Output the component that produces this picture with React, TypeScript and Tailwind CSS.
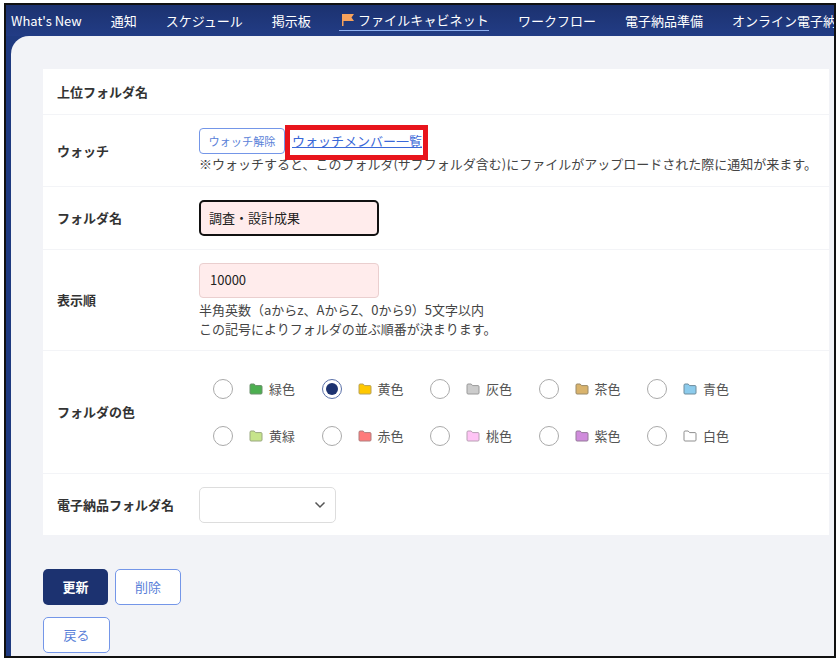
import React from "react";

const font = { fontFamily: '"Noto Sans CJK JP","Noto Sans",sans-serif' };

function Folder({ fill, stroke }: { fill: string; stroke: string }) {
  return (
    <svg width="14" height="12" viewBox="0 0 14 12" className="shrink-0">
      <path d="M1 2.2C1 1.5 1.4 1 2 1h3.2l1.4 1.6H12c.6 0 1 .4 1 1V10c0 .6-.4 1-1 1H2c-.6 0-1-.4-1-1z" fill={fill} stroke={stroke} strokeWidth="1" />
    </svg>
  );
}

const colors = [
  ["緑色", "#4caf50", "#6b8f6c"],
  ["黄色", "#ffc800", "#b8a25a"],
  ["灰色", "#cccccc", "#9a9a9a"],
  ["茶色", "#d9b36c", "#9a8a68"],
  ["青色", "#8ccbec", "#6f8c9c"],
  ["黄緑", "#c6e48b", "#9aa880"],
  ["赤色", "#ff7b7b", "#b08080"],
  ["桃色", "#ffc4f5", "#b8a0b4"],
  ["紫色", "#d08cdc", "#957a9a"],
  ["白色", "#ffffff", "#8f8f8f"],
];

const nav = ["What's New", "通知", "スケジュール", "掲示板"];
const nav2 = ["ワークフロー", "電子納品準備", "オンライン電子納"];

function Row({ label, h, children }: { label: string; h: string; children?: React.ReactNode }) {
  return (
    <div className={`flex items-center border-b border-[#f3f4f7] last:border-b-0 ${h}`}>
      <div className="w-[156px] shrink-0 pl-[14px] text-[13px] font-bold text-[#333333]">{label}</div>
      <div className="flex-1">{children}</div>
    </div>
  );
}

export default function App() {
  return (
    <div className="w-[840px] h-[662px] overflow-hidden bg-white pt-[3px] pl-[4px]" style={font}>
      <div className="flex flex-col w-[832px] h-[655px] overflow-hidden border-2 border-[#111111] bg-[#1f3a80]">
        <nav className="flex items-center h-[31px] shrink-0 gap-[29px] pl-[5px] whitespace-nowrap text-[13px] text-white bg-gradient-to-b from-[#1c3270] to-[#223c85]">
          {nav.map((n) => (
            <span key={n}>{n}</span>
          ))}
          <span className="flex items-center h-[20px] gap-[3px] -ml-[1px] pl-[2px] border-b border-[#8fb0f0] tracking-[0.1px]">
            <svg width="14" height="14" viewBox="0 0 14 14" className="shrink-0">
              <path d="M1 1h12l-2.5 3.5L13 8H2.5v5H1z" fill="#f7a25c" />
            </svg>
            ファイルキャビネット
          </span>
          {nav2.map((n) => (
            <span key={n}>{n}</span>
          ))}
        </nav>
        <main className="flex-1 ml-[5px] rounded-tl-[18px] bg-[#f2f3f7] pt-[33px] pl-[32px] pr-[5px]">
          <section className="bg-white text-[#333333]">
            <Row label="上位フォルダ名" h="h-[46px]" />
            <Row label="ウォッチ" h="h-[72px]">
              <div className="flex items-center relative h-[26px]">
                <button className="flex items-center justify-center w-[86px] h-[26px] rounded-[4px] border border-[#7496e8] bg-white text-[11.2px] text-[#5a7fd8]">
                  ウォッチ解除
                </button>
                <a className="ml-[7px] text-[13px] leading-[20px] text-[#3a68d8] underline">ウォッチメンバー一覧</a>
                <div className="absolute left-[86px] -top-[3px] w-[143px] h-[35px] border-[5px] border-[#e8141c]" />
              </div>
              <p className="mt-[1px] text-[13px] leading-[18px] text-[#444444] whitespace-nowrap">
                ※ウォッチすると、このフォルダ(サブフォルダ含む)にファイルがアップロードされた際に通知が来ます。
              </p>
            </Row>
            <Row label="フォルダ名" h="h-[63px]">
              <div className="flex items-center w-[180px] h-[36px] rounded-[5px] border-2 border-[#111111] bg-[#ffecec] pl-[8px] text-[13px] text-[#222222]">
                調査・設計成果
              </div>
            </Row>
            <Row label="表示順" h="h-[101px]">
              <div className="flex items-center w-[180px] h-[35px] rounded-[4px] border border-[#eacfcf] bg-[#ffecec] pl-[10px] text-[13px] text-[#222222]">
                10000
              </div>
              <p className="mt-[2px] text-[13px] leading-[19px] text-[#444444]">半角英数（aからz、AからZ、0から9）5文字以内</p>
              <p className="text-[13px] leading-[19px] text-[#444444]">この記号によりフォルダの並ぶ順番が決まります。</p>
            </Row>
            <Row label="フォルダの色" h="h-[123px]">
              <div className="grid grid-cols-[repeat(5,108.5px)] grid-rows-[47px_47px] items-center pl-[14px]">
                {colors.map(([name, fill, stroke], i) => (
                  <label key={name} className="flex items-center text-[13px] text-[#555555]">
                    {i === 1 ? (
                      <span className="flex items-center justify-center w-[20px] h-[20px] mr-[16px] rounded-full border border-[#5a70a8] bg-white">
                        <span className="w-[12px] h-[12px] rounded-full bg-[#1c3270]" />
                      </span>
                    ) : (
                      <span className="w-[20px] h-[20px] mr-[16px] rounded-full border border-[#aaaaaa] bg-white" />
                    )}
                    <Folder fill={fill} stroke={stroke} />
                    <span className="ml-[6px]">{name}</span>
                  </label>
                ))}
              </div>
            </Row>
            <Row label="電子納品フォルダ名" h="h-[61px]">
              <div className="flex items-center justify-end w-[137px] h-[36px] rounded-[5px] border border-[#dddddd] bg-white pr-[9px]">
                <svg width="12" height="8" viewBox="0 0 12 8">
                  <path d="M1.5 1.5 6 6l4.5-4.5" fill="none" stroke="#555555" strokeWidth="1.5" />
                </svg>
              </div>
            </Row>
          </section>
          <div className="flex gap-[7px] mt-[34px]">
            <button className="w-[65px] h-[36px] rounded-[5px] bg-[#1c3270] text-[13px] font-bold text-white">更新</button>
            <button className="w-[66px] h-[36px] rounded-[5px] border border-[#7496e8] bg-white text-[13px] text-[#5a7fd8]">削除</button>
          </div>
          <button className="block w-[67px] h-[36px] mt-[12px] rounded-[5px] border border-[#7496e8] bg-white text-[13px] text-[#5a7fd8]">戻る</button>
        </main>
      </div>
    </div>
  );
}
